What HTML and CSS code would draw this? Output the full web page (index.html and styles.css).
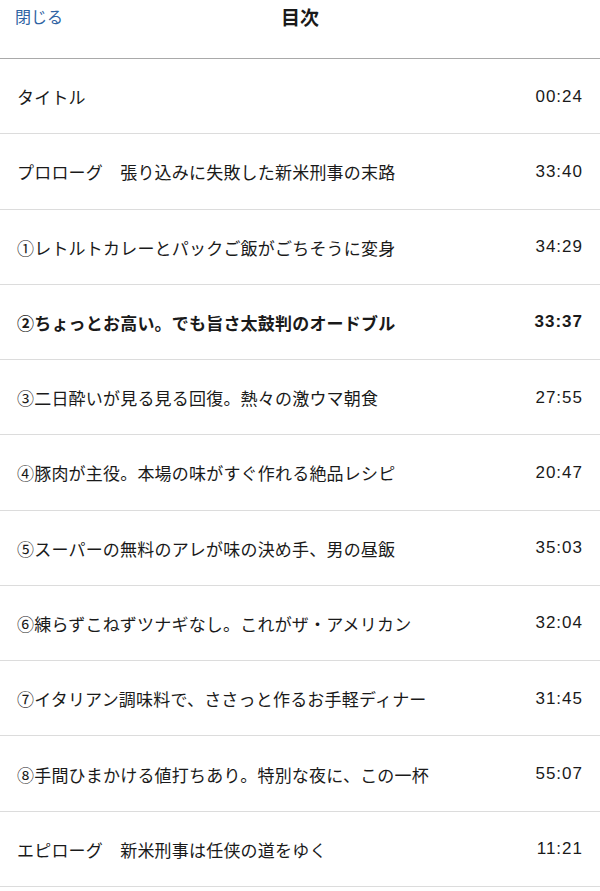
FILE: index.html
```html
<!DOCTYPE html>
<html lang="ja">
<head>
  <meta charset="UTF-8">
  <title>目次</title>
  <link rel="stylesheet" href="styles.css">
</head>
<body>

<div class="header">
  <a class="close" href="#">閉じる</a>
  <h1>目次</h1>
</div>

<ul class="toc">
  <li class="item"><span class="label">タイトル</span><span class="time">00:24</span></li>
  <li class="item"><span class="label">プロローグ　張り込みに失敗した新米刑事の末路</span><span class="time">33:40</span></li>
  <li class="item"><span class="label">①レトルトカレーとパックご飯がごちそうに変身</span><span class="time">34:29</span></li>
  <li class="item current"><span class="label">②ちょっとお高い。でも旨さ太鼓判のオードブル</span><span class="time">33:37</span></li>
  <li class="item"><span class="label">③二日酔いが見る見る回復。熱々の激ウマ朝食</span><span class="time">27:55</span></li>
  <li class="item"><span class="label">④豚肉が主役。本場の味がすぐ作れる絶品レシピ</span><span class="time">20:47</span></li>
  <li class="item"><span class="label">⑤スーパーの無料のアレが味の決め手、男の昼飯</span><span class="time">35:03</span></li>
  <li class="item"><span class="label">⑥練らずこねずツナギなし。これがザ・アメリカン</span><span class="time">32:04</span></li>
  <li class="item"><span class="label">⑦イタリアン調味料で、ささっと作るお手軽ディナー</span><span class="time">31:45</span></li>
  <li class="item"><span class="label">⑧手間ひまかける値打ちあり。特別な夜に、この一杯</span><span class="time">55:07</span></li>
  <li class="item"><span class="label">エピローグ　新米刑事は任侠の道をゆく</span><span class="time">11:21</span></li>
</ul>

</body>
</html>
```

FILE: styles.css
```css
body {
  font-family: "Liberation Sans", "Noto Sans CJK JP", sans-serif;
  background-color: #fff;
  color: #1a1a1a;
  margin: 0;
}

.header {
  position: relative;
  height: 59px;
  box-sizing: border-box;
  border-bottom: 1px solid #a9a9a9;
  padding: 7px 15px 0;
}

.close {
  color: #2f64a3;
  text-decoration: none;
  font-size: 16px;
  line-height: 22px;
}

.header h1 {
  position: absolute;
  top: 7px;
  left: 0;
  right: 0;
  margin: 0;
  text-align: center;
  font-size: 19px;
  line-height: 24px;
  font-weight: bold;
  pointer-events: none;
}

.toc {
  list-style: none;
  margin: 0;
  padding: 0;
}

.item {
  display: flex;
  justify-content: space-between;
  align-items: center;
  height: 75.27px;
  box-sizing: border-box;
  border-bottom: 1px solid #dcdcdc;
  padding: 1px 17px 0;
  font-size: 17px;
  letter-spacing: 0.2px;
}

.time {
  letter-spacing: 1px;
}

.current {
  font-weight: bold;
}
```
